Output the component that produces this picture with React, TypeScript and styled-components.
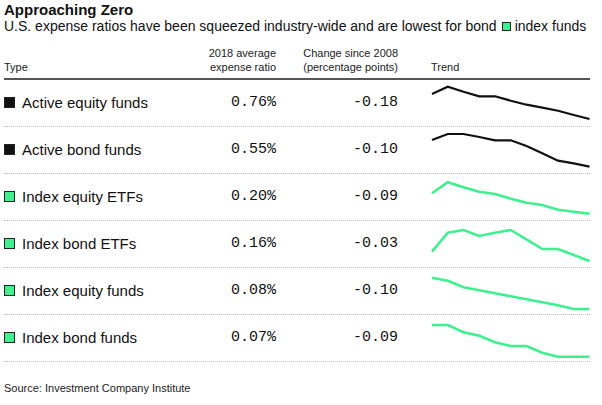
import React from "react";
import styled, { createGlobalStyle } from "styled-components";

const GlobalStyle = createGlobalStyle`
  body {
    margin: 0;
    background: #fff;
    font-family: "Liberation Sans", Arial, sans-serif;
    color: #111;
  }
`;

const GREEN = "#3ff08f";

const Page = styled.div`
  width: 586px;
  padding: 1px 4px 0;
`;

const Title = styled.div`
  font-size: 15px;
  line-height: 17px;
  font-weight: 700;
  color: #111;
`;

const Subtitle = styled.div`
  font-size: 14px;
  line-height: 16px;
  color: #111;
  display: flex;
  align-items: center;
  white-space: nowrap;
`;

const Swatch = styled.span<{ $color: string; $size: number }>`
  display: inline-block;
  box-sizing: border-box;
  width: ${(p) => p.$size}px;
  height: ${(p) => p.$size}px;
  background: ${(p) => p.$color};
  border: 1px solid #222;
  flex-shrink: 0;
`;

const InlineSwatch = styled(Swatch)`
  margin: 1px 4px 0 5px;
`;

const Grid = styled.div`
  display: grid;
  grid-template-columns: 202px 70px 122px 1fr;
`;

const Header = styled(Grid)`
  align-items: end;
  padding-top: 12px;
  padding-bottom: 4px;
  border-bottom: 2px solid #555;
  font-size: 11px;
  line-height: 14px;
  color: #222;
`;

const HeadCell = styled.div<{ $align?: string; $pad?: number }>`
  text-align: ${(p) => p.$align || "left"};
  padding-left: ${(p) => p.$pad || 0}px;
  white-space: nowrap;
`;

const Row = styled(Grid)`
  height: 46px;
  align-items: center;
  border-bottom: 1px dotted #bbb;
`;

const Label = styled.div`
  display: flex;
  align-items: center;
  gap: 7px;
  padding-bottom: 2px;
  font-size: 15px;
  line-height: 17px;
  color: #111;
`;

const Num = styled.div`
  text-align: right;
  padding-bottom: 2px;
  font-family: "Liberation Mono", "DejaVu Sans Mono", monospace;
  font-size: 15px;
  line-height: 17px;
  color: #111;
`;

const Spark = styled.svg`
  display: block;
  margin-left: 32px;
  align-self: stretch;
`;

const Source = styled.div`
  margin-top: 20px;
  font-size: 11px;
  line-height: 13px;
  color: #222;
`;

type Fund = {
  name: string;
  ratio: string;
  change: string;
  index: boolean;
  trend: number[];
};

const funds: Fund[] = [
  {
    name: "Active equity funds",
    ratio: "0.76%",
    change: "-0.18",
    index: false,
    trend: [14, 6.7, 11.7, 16.3, 16.3, 20.7, 24.7, 27.7, 30.7, 35, 39],
  },
  {
    name: "Active bond funds",
    ratio: "0.55%",
    change: "-0.10",
    index: false,
    trend: [13, 7, 7, 10, 13.3, 13.3, 19, 26.3, 33.7, 36.3, 39.7],
  },
  {
    name: "Index equity ETFs",
    ratio: "0.20%",
    change: "-0.09",
    index: true,
    trend: [19.3, 8.3, 13.3, 17.7, 20, 24.7, 28.7, 31, 35.7, 37.7, 39.7],
  },
  {
    name: "Index bond ETFs",
    ratio: "0.16%",
    change: "-0.03",
    index: true,
    trend: [30.7, 11.7, 9, 15, 11.7, 9, 18.3, 28, 28, 34, 40],
  },
  {
    name: "Index equity funds",
    ratio: "0.08%",
    change: "-0.10",
    index: true,
    trend: [9.7, 12.7, 19.3, 22.3, 25.3, 28.3, 31.3, 34.3, 37.3, 41, 41],
  },
  {
    name: "Index bond funds",
    ratio: "0.07%",
    change: "-0.09",
    index: true,
    trend: [10, 10, 17.3, 20.7, 27.3, 31, 31, 37.7, 41.7, 41.7, 41.7],
  },
];

const Trend = ({ values, color, width }: { values: number[]; color: string; width: number }) => {
  const pts = values.map((y, i) => `${(2 + i * 15.75).toFixed(2)},${y}`).join(" ");
  return (
    <Spark width={160} height={46} viewBox="0 0 160 46">
      <polyline
        points={pts}
        fill="none"
        stroke={color}
        strokeWidth={width}
        strokeLinejoin="miter"
        strokeLinecap="butt"
      />
    </Spark>
  );
};

export default function App() {
  return (
    <>
      <GlobalStyle />
      <Page>
        <Title>Approaching Zero</Title>
        <Subtitle>
          U.S. expense ratios have been squeezed industry-wide and are lowest for bond
          <InlineSwatch $color={GREEN} $size={9} />
          index funds
        </Subtitle>
        <Header>
          <HeadCell>Type</HeadCell>
          <HeadCell $align="right">
            2018 average
            <br />
            expense ratio
          </HeadCell>
          <HeadCell $align="right">
            Change since 2008
            <br />
            (percentage points)
          </HeadCell>
          <HeadCell $pad={33}>Trend</HeadCell>
        </Header>
        {funds.map((f) => (
          <Row key={f.name}>
            <Label>
              <Swatch $color={f.index ? GREEN : "#111"} $size={11} />
              {f.name}
            </Label>
            <Num>{f.ratio}</Num>
            <Num>{f.change}</Num>
            <Trend
              values={f.trend}
              color={f.index ? GREEN : "#111"}
              width={f.index ? 2.6 : 2.2}
            />
          </Row>
        ))}
        <Source>Source: Investment Company Institute</Source>
      </Page>
    </>
  );
}
